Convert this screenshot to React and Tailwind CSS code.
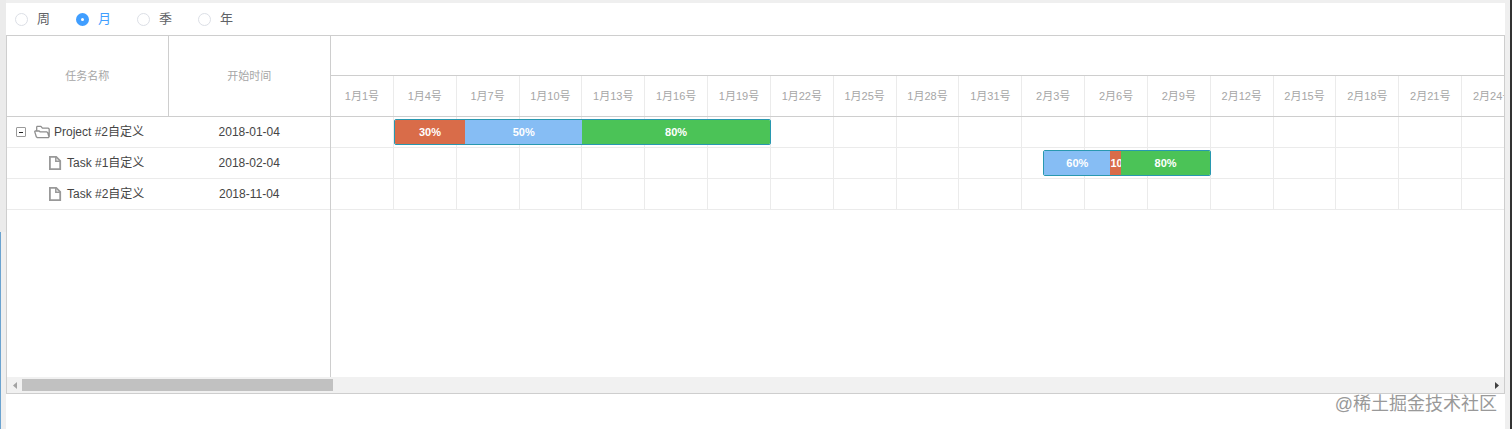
import { useState } from 'react';

const scales = ['周', '月', '季', '年'];

const dates = [
  '1月1号', '1月4号', '1月7号', '1月10号', '1月13号', '1月16号', '1月19号',
  '1月22号', '1月25号', '1月28号', '1月31号', '2月3号', '2月6号', '2月9号',
  '2月12号', '2月15号', '2月18号', '2月21号', '2月24号',
];

const RED = 'bg-[#d96c49]';
const BLUE = 'bg-[#86bdf4]';
const GREEN = 'bg-[#4bc357]';

const tasks = [
  {
    name: 'Project #2自定义',
    start: '2018-01-04',
    parent: true,
    place: 'col-start-4 col-span-18',
    parts: [[30, RED], [50, BLUE], [80, GREEN]],
  },
  {
    name: 'Task #1自定义',
    start: '2018-02-04',
    place: 'col-start-35 col-span-8',
    parts: [[60, BLUE], [10, RED], [80, GREEN]],
  },
  { name: 'Task #2自定义', start: '2018-11-04' },
];

function FolderIcon() {
  return (
    <svg className="h-4 w-4 shrink-0" viewBox="0 0 16 16" fill="none" stroke="#8f8f8f" strokeWidth="1.3" strokeLinejoin="round">
      <path d="M2.7 7V2.9L3.3 2.3h3.6l1.5 1.9h5.9l.9.8v7.6l-.8 1H3.2l-.9-.8L.7 7.6l.5-.6h4l1 .9h6.6l.9.7 1.1 3.6" />
    </svg>
  );
}

function FileIcon() {
  return (
    <svg className="h-4 w-4 shrink-0" viewBox="0 0 16 16" fill="none" stroke="#999" strokeWidth="1.8">
      <path d="M2.9 1.9h6.3l4 4v8.2H2.9z" />
      <path d="M8.8 1.9v4.4h4.4" strokeWidth="1.5" />
    </svg>
  );
}

function ScaleBar() {
  const [scale, setScale] = useState('月');
  return (
    <div className="flex h-8 items-center gap-[26px] pl-[9px] text-[13px] leading-5 text-[#606266]">
      {scales.map((s) => (
        <label key={s} className="flex cursor-pointer items-center gap-[9px] has-checked:text-[#409eff]">
          <input
            type="radio"
            name="scale"
            value={s}
            checked={scale === s}
            onChange={() => setScale(s)}
            className="h-[13px] w-[13px] appearance-none rounded-full border border-[#dcdfe6] bg-white checked:border-[5px] checked:border-[#409eff]"
          />
          {s}
        </label>
      ))}
    </div>
  );
}

function TaskTable() {
  return (
    <div className="w-[324px] shrink-0 border-r border-[#cecece]">
      <table className="w-full table-fixed border-separate border-spacing-0">
        <thead>
          <tr className="h-[81px] text-[11px] text-[#a6a6a6]">
            <th scope="col" className="w-1/2 border-r border-b border-[#cecece] p-0 font-normal">任务名称</th>
            <th scope="col" className="w-1/2 border-b border-[#cecece] p-0 font-normal">开始时间</th>
          </tr>
        </thead>
        <tbody>
          {tasks.map((t) => (
            <tr key={t.name} className="h-[31px] text-[12px] leading-4 text-[#454545]">
              <td className="border-b border-[#ebebeb] p-0">
                {t.parent ? (
                  <div className="flex items-center pl-[9px]">
                    <button type="button" aria-label="收起" className="mr-2 flex h-[10px] w-[10px] items-center justify-center rounded-[1px] border border-[#9a9a9a]">
                      <span className="h-px w-1 bg-[#222]" />
                    </button>
                    <FolderIcon />
                    <span className="ml-1 whitespace-nowrap">{t.name}</span>
                  </div>
                ) : (
                  <div className="flex items-center pl-10">
                    <FileIcon />
                    <span className="ml-1 whitespace-nowrap">{t.name}</span>
                  </div>
                )}
              </td>
              <td className="border-b border-[#ebebeb] p-0 text-center">{t.start}</td>
            </tr>
          ))}
        </tbody>
      </table>
    </div>
  );
}

function Bar({ place, parts }) {
  return (
    <div className={`z-10 row-start-1 my-[2px] flex self-stretch overflow-hidden rounded-xs border border-[#2898b0] text-[11px] leading-4 font-bold text-white ${place}`}>
      {parts.map(([value, color], i) => (
        <div key={i} className={`flex min-w-0 basis-0 items-center overflow-hidden ${color}`} style={{ flexGrow: value }}>
          <span className="mx-auto">{value}%</span>
        </div>
      ))}
    </div>
  );
}

function Timeline() {
  return (
    <div className="min-w-0 flex-1 overflow-hidden">
      <div className="w-[1194px] min-w-full">
        <div className="h-10 border-b border-[#cecece]" />
        <div className="grid h-[41px] grid-cols-19 border-b border-[#cecece] text-[11px] text-[#a6a6a6]">
          {dates.map((d) => (
            <div key={d} className="flex items-center justify-center border-r border-[#ebebeb] whitespace-nowrap">{d}</div>
          ))}
        </div>
        {/* One grid column per day, three days to a date cell. */}
        {tasks.map((t) => (
          <div key={t.name} className="grid h-[31px] grid-cols-57 grid-rows-1 border-b border-[#ebebeb]">
            <div className="col-span-full row-start-1 grid grid-cols-19">
              {dates.map((d) => (
                <div key={d} className="border-r border-[#ebebeb]" />
              ))}
            </div>
            {t.parts && <Bar place={t.place} parts={t.parts} />}
          </div>
        ))}
      </div>
    </div>
  );
}

function ScrollTrack() {
  return (
    <div className="flex h-4 items-center bg-[#f1f1f1]">
      <button type="button" aria-label="向左滚动" className="flex h-4 w-[15px] items-center justify-center">
        <svg className="h-[7px] w-1" viewBox="0 0 4 7" fill="#a3a3a3"><path d="M4 0v7L0 3.5z" /></svg>
      </button>
      <div className="flex-1">
        <div className="h-3 w-[311px] bg-[#c1c1c1]" />
      </div>
      <button type="button" aria-label="向右滚动" className="flex h-4 w-[15px] items-center justify-center">
        <svg className="h-[7px] w-1" viewBox="0 0 4 7" fill="#404040"><path d="M0 0v7l4-3.5z" /></svg>
      </button>
    </div>
  );
}

export default function App() {
  return (
    <div className="relative flex min-h-screen bg-[#efefef] font-['Liberation_Sans','Noto_Sans_CJK_SC',sans-serif]">
      <div className="flex w-[6px] shrink-0 flex-col">
        <div className="h-[232px] bg-[#ebebeb]" />
        <div className="flex-1 border-l border-[#6ba3d0]" />
      </div>
      <main className="mt-[3px] min-w-0 flex-1 bg-white">
        <ScaleBar />
        <section className="border border-[#cecece]">
          <div className="flex min-h-[341px]">
            <TaskTable />
            <Timeline />
          </div>
          <ScrollTrack />
        </section>
      </main>
      <div className="w-[7px] shrink-0 border-r-2 border-[#333]" />
      <div className="absolute right-[15px] bottom-3 z-20 text-[18px] leading-[26px] text-[#999]">@稀土掘金技术社区</div>
    </div>
  );
}
